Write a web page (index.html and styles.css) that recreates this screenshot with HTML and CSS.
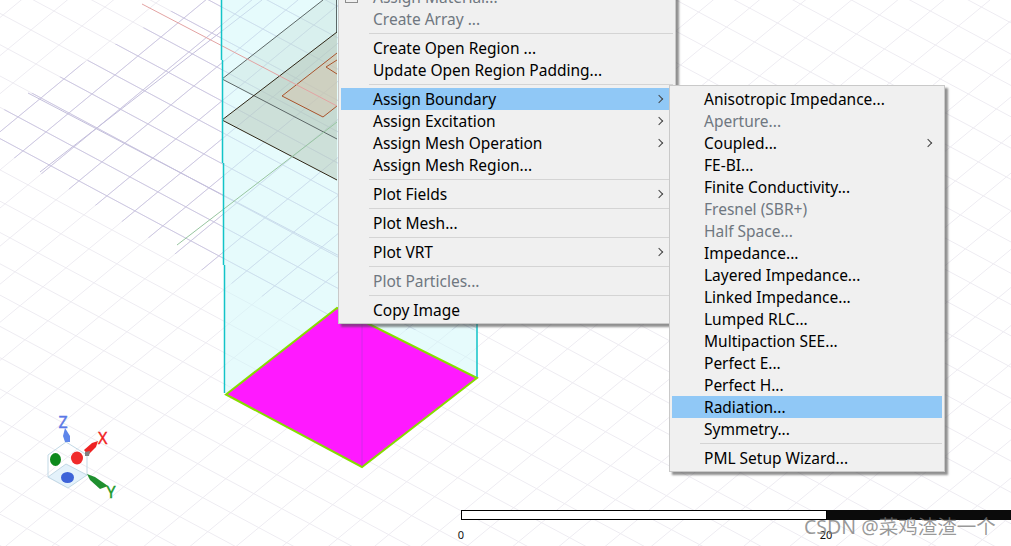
FILE: index.html
```html
<!DOCTYPE html>
<html lang="en">
<head>
<meta charset="utf-8">
<title>Assign Boundary menu</title>
<link rel="stylesheet" href="styles.css">
</head>
<body>
<main class="scene">
  <svg class="canvas" width="1011" height="546" viewBox="0 0 1011 546">
    <defs>
      <path id="grid" d="M0 545.5l1011 541.6M0 514.2l1011 541.6M0 482.9l1011 541.6M0 451.6l1011 541.6M0 420.3l1011 541.6M0 389l1011 541.6M0 357.7l1011 541.6M0 326.4l1011 541.6M0 295.1l1011 541.6M0 263.8l1011 541.6M0 232.5l1011 541.6M0 201.2l1011 541.6M0 169.9l1011 541.6M0 138.6l1011 541.6M0 107.3l1011 541.6M0 76l1011 541.6M0 44.7l1011 541.6M0 13.4l1011 541.6M0 -17.9l1011 541.6M0 -49.2l1011 541.6M0 -80.5l1011 541.6M0 -111.8l1011 541.6M0 -143.1l1011 541.6M0 -174.4l1011 541.6M0 -205.7l1011 541.6M0 -237l1011 541.6M0 -268.3l1011 541.6M0 -299.6l1011 541.6M0 -330.9l1011 541.6M0 -362.2l1011 541.6M0 -393.5l1011 541.6M0 -424.8l1011 541.6M0 -456.1l1011 541.6M0 -487.4l1011 541.6M0 -518.7l1011 541.6M0 17.5l1011 -835M0 55.6l1011 -835M0 93.7l1011 -835M0 131.8l1011 -835M0 169.9l1011 -835M0 208l1011 -835M0 246.1l1011 -835M0 284.2l1011 -835M0 322.3l1011 -835M0 360.4l1011 -835M0 398.5l1011 -835M0 436.6l1011 -835M0 474.7l1011 -835M0 512.8l1011 -835M0 550.9l1011 -835M0 589l1011 -835M0 627.1l1011 -835M0 665.2l1011 -835M0 703.3l1011 -835M0 741.4l1011 -835M0 779.5l1011 -835M0 817.6l1011 -835M0 855.7l1011 -835M0 893.8l1011 -835M0 931.9l1011 -835M0 970l1011 -835M0 1008.1l1011 -835M0 1046.2l1011 -835M0 1084.3l1011 -835M0 1122.4l1011 -835M0 1160.5l1011 -835M0 1198.6l1011 -835M0 1236.7l1011 -835M0 1274.8l1011 -835M0 1312.9l1011 -835M0 1351l1011 -835"/>
      <clipPath id="near">
        <path d="M0 112L190 0H480V330H340L205 272L70 190L0 150Z"/>
      </clipPath>
    </defs>

    <use href="#grid" class="grid-faint"/>
    <use href="#grid" class="grid-mid" clip-path="url(#near)"/>
    <path class="axis-purple" d="M28 93L223 195L477 328M40 172L262 0"/>

    <path class="box-fill" d="M221 0H480L477 378L337 308L226 394Z"/>
    <path class="plane-light" d="M222 79L323 0H337V139Z"/>
    <path class="plane-dark" d="M222 120L337 32V180Z"/>
    <path class="patch" d="M282 96L337 53V106L323 117Z"/>
    <path class="edge-grey" d="M222 79L323 0M222 79L337 139M336.5 0V32"/>
    <path class="edge-dark" d="M222 120L337 32M222 120L337 180"/>
    <path class="edge-orange" d="M337 53L282 96L323 117L337 106M337 60L326 67L337 74"/>
    <path class="axis-red" d="M142 4L337 106"/>
    <path class="axis-green" d="M177 245L337 122"/>
    <path class="box-edge" d="M221.5 0V60M222.5 60V163M223.5 163V265M224.5 265V393M477 323V378"/>

    <path class="port" d="M226 394.5L337 308L477 378L362 467Z"/>
    <path class="port-seam" d="M362 320V466"/>

    <g class="triad">
      <path class="triad-floor" d="M48 477L66 464L87 475L68 488Z"/>
      <path class="triad-frame" d="M66 442L87 455V475L68 488L48 477V455ZM48 477L66 464L87 475"/>
      <ellipse class="ball-green" cx="55.5" cy="459.5" rx="5.5" ry="6.5"/>
      <ellipse class="ball-red" cx="77" cy="458" rx="6" ry="6.5"/>
      <ellipse class="ball-blue" cx="67.5" cy="477.5" rx="6.5" ry="5.5"/>
      <path class="arrow-blue" d="M65 428L70 436L70 442H65L63 436Z"/>
      <path class="arrow-red" d="M84 450L92 443L98 441L96 447L88 455Z"/>
      <path class="arrow-grey" d="M85 452L90 451L89 456L85 456Z"/>
      <path class="arrow-green" d="M87 474L95 477L108 486L100 489L90 480Z"/>
      <text class="label-z" x="58.5" y="427.5">Z</text>
      <text class="label-x" x="98" y="443.5">X</text>
      <text class="label-y" x="106.5" y="497.5">Y</text>
    </g>
  </svg>

  <div class="scale">
    <div class="scale-bar">
      <span class="scale-white"></span>
      <span class="scale-black"></span>
    </div>
    <span class="scale-zero">0</span>
    <span class="scale-twenty">20</span>
  </div>
  <div class="watermark">CSDN @菜鸡渣渣一个</div>

  <nav class="menu menu-main">
    <span class="menu-icon"></span>
    <div class="item off">Assign Material...</div>
    <div class="item off">Create Array ...</div>
    <div class="sep"></div>
    <div class="item">Create Open Region ...</div>
    <div class="item">Update Open Region Padding...</div>
    <div class="sep"></div>
    <div class="item hot sub">Assign Boundary</div>
    <div class="item sub">Assign Excitation</div>
    <div class="item sub">Assign Mesh Operation</div>
    <div class="item">Assign Mesh Region...</div>
    <div class="sep"></div>
    <div class="item sub">Plot Fields</div>
    <div class="sep"></div>
    <div class="item">Plot Mesh...</div>
    <div class="sep"></div>
    <div class="item sub">Plot VRT</div>
    <div class="sep"></div>
    <div class="item off">Plot Particles...</div>
    <div class="sep"></div>
    <div class="item">Copy Image</div>
  </nav>

  <nav class="menu menu-sub">
    <div class="item">Anisotropic Impedance...</div>
    <div class="item off">Aperture...</div>
    <div class="item sub">Coupled...</div>
    <div class="item">FE-BI...</div>
    <div class="item">Finite Conductivity...</div>
    <div class="item off">Fresnel (SBR+)</div>
    <div class="item off">Half Space...</div>
    <div class="item">Impedance...</div>
    <div class="item">Layered Impedance...</div>
    <div class="item">Linked Impedance...</div>
    <div class="item">Lumped RLC...</div>
    <div class="item">Multipaction SEE...</div>
    <div class="item">Perfect E...</div>
    <div class="item">Perfect H...</div>
    <div class="item hot">Radiation...</div>
    <div class="item">Symmetry...</div>
    <div class="sep"></div>
    <div class="item">PML Setup Wizard...</div>
  </nav>
</main>
</body>
</html>
```
FILE: styles.css
```css
* { box-sizing: border-box; }
html, body { margin: 0; padding: 0; background: #fff; }
.scene {
  position: relative;
  width: 1011px;
  height: 546px;
  overflow: hidden;
  background: #fff;
  font-family: "Noto Sans", "Open Sans", sans-serif;
}
.canvas { position: absolute; left: 0; top: 0; display: block; }

.grid-faint, .grid-mid { fill: none; stroke-width: 1; }
.grid-faint { stroke: #eeecf2; }
.grid-mid { stroke: #cdc8e2; }
.axis-purple { fill: none; stroke: #c4bfdc; stroke-width: 1; }
.box-fill { fill: rgba(205, 247, 250, 0.5); }
.plane-light { fill: rgba(190, 215, 205, 0.3); }
.plane-dark { fill: rgba(175, 190, 175, 0.45); }
.patch { fill: rgba(215, 195, 170, 0.45); }
.edge-grey { fill: none; stroke: #5c6767; }
.edge-dark { fill: none; stroke: #2e2616; }
.edge-orange { fill: none; stroke: #a9532c; }
.axis-red { fill: none; stroke: #e3a3a3; }
.axis-green { fill: none; stroke: #97c5a0; }
.box-edge { fill: none; stroke: #12c4c8; stroke-width: 1.5; }
.port { fill: #ff19ff; stroke: #86dc00; stroke-width: 2; }
.port-seam { fill: none; stroke: #cf2ce8; stroke-width: 1; }

.triad-floor { fill: #e4f2fb; }
.triad-frame { fill: none; stroke: #c3d9e6; }
.ball-green { fill: #0d8a1c; }
.ball-red { fill: #f02a2a; }
.ball-blue { fill: #3d63d8; }
.arrow-blue { fill: #5e86ea; }
.arrow-red { fill: #ee2222; }
.arrow-grey { fill: #808080; }
.arrow-green { fill: #1f8f2f; }
.label-z, .label-x, .label-y { font-size: 16px; font-family: "Noto Sans", sans-serif; stroke-width: 0.4; }
.label-z { fill: #5a78e6; stroke: #5a78e6; }
.label-x { fill: #f01c1c; stroke: #f01c1c; }
.label-y { fill: #1d9a2a; stroke: #1d9a2a; }

.scale {
  position: absolute;
  left: 461px;
  top: 510px;
  width: 550px;
  height: 36px;
  font-size: 11px;
  color: #111;
}
.scale-bar { display: flex; height: 10px; }
.scale-white { width: 366px; background: #fff; border: 1px solid #000; }
.scale-black { flex: 1; background: #0b0b0b; }
.scale-zero, .scale-twenty { position: absolute; top: 18px; line-height: 14px; transform: translateX(-50%); }
.scale-zero { left: 0; }
.scale-twenty { left: 365px; }

.watermark {
  position: absolute;
  left: 804px;
  top: 514px;
  font-size: 19.5px;
  line-height: 26px;
  white-space: nowrap;
  color: rgba(120, 120, 120, 0.75);
  font-family: "Noto Sans", "Noto Sans CJK SC", sans-serif;
}

.menu {
  position: absolute;
  background: #f0f0f0;
  border: 1px solid #c9c9c9;
  padding: 2px;
  box-shadow: 3px 3px 2px rgba(70, 70, 70, 0.6);
  font-size: 15.5px;
  color: #000;
}
.menu-main { left: 338px; top: -17px; width: 338px; }
.menu-sub { left: 669px; top: 85px; width: 276px; }
.menu-icon {
  position: absolute;
  left: 6px;
  top: 14px;
  width: 13px;
  height: 5px;
  border: 1px solid #8d8d8d;
  border-top: 0;
}
.item {
  position: relative;
  height: 22px;
  line-height: 23px;
  padding-left: 32px;
  white-space: nowrap;
}
.off { color: #6f7780; }
.hot { background: #90c8f6; }
.sub::after {
  content: "";
  position: absolute;
  right: 11px;
  top: 8px;
  width: 5px;
  height: 5px;
  border-top: 1px solid #444;
  border-right: 1px solid #444;
  transform: rotate(45deg);
}
.sep { height: 7px; padding: 3px 0; margin-left: 28px; }
.sep::before { content: ""; display: block; height: 1px; background: #d4d4d4; }
```
